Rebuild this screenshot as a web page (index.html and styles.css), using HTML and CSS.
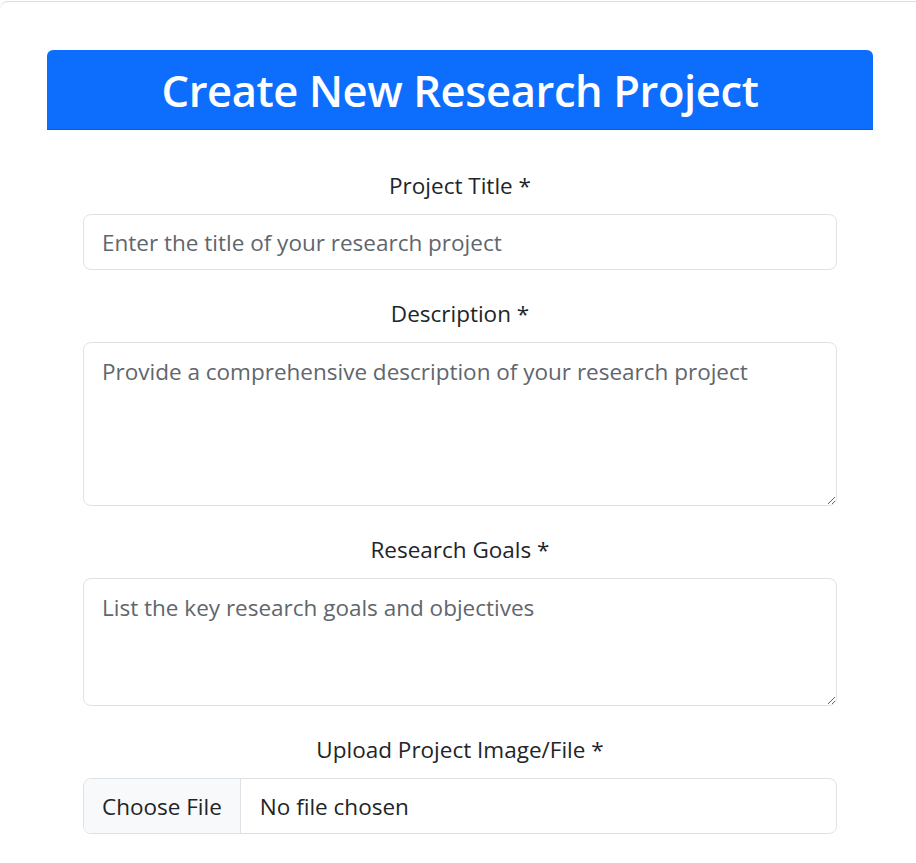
FILE: index.html
```html
<!DOCTYPE html>
<html lang="en">
<head>
<meta charset="utf-8">
<title>Create New Research Project</title>
<link rel="stylesheet" href="styles.css">
</head>
<body>
<div class="card">
  <div class="panel">
    <div class="panel-header">
      <h1 class="panel-title">Create New Research Project</h1>
    </div>
    <form class="form">
      <div class="group">
        <label class="label" for="title">Project Title *</label>
        <input class="control" id="title" type="text" placeholder="Enter the title of your research project">
      </div>
      <div class="group">
        <label class="label" for="desc">Description *</label>
        <textarea class="control area-desc" id="desc" placeholder="Provide a comprehensive description of your research project"></textarea>
      </div>
      <div class="group">
        <label class="label" for="goals">Research Goals *</label>
        <textarea class="control area-goals" id="goals" placeholder="List the key research goals and objectives"></textarea>
      </div>
      <div class="group">
        <label class="label" for="file">Upload Project Image/File *</label>
        <input class="control file" id="file" type="file">
      </div>
    </form>
  </div>
</div>
</body>
</html>
```

FILE: styles.css
```css
html, body {
  margin: 0;
  padding: 0;
  background: #ffffff;
}

body {
  font-family: "Open Sans", "Noto Sans", sans-serif;
  color: #212529;
  overflow: hidden;
}

.card {
  margin-top: 1px;
  border-top: 1px solid #dcdcdc;
  border-top-left-radius: 8px;
  padding: 48px 0 0 47px;
}

.panel {
  width: 826px;
}

.panel-header {
  background: #0d6efd;
  border-radius: 6px 6px 0 0;
  border-bottom: 1px solid #0b5ed7;
  height: 79px;
  display: flex;
  align-items: center;
  justify-content: center;
}

.panel-title {
  margin: 0 0 -3px;
  color: #ffffff;
  font-size: 43.5px;
  font-weight: 600;
  letter-spacing: -0.4px;
  line-height: 1.2;
}

.form {
  padding: 41px 36px 0;
}

.group {
  margin-bottom: 29px;
}

.label {
  display: block;
  text-align: center;
  font-size: 22.5px;
  line-height: 30px;
  margin-bottom: 13px;
  color: #212529;
}

.control {
  display: block;
  box-sizing: border-box;
  width: 100%;
  margin: 0;
  padding: 13px 18px 11px;
  font-family: inherit;
  font-size: 22.5px;
  line-height: 30px;
  color: #212529;
  background: #ffffff;
  border: 1px solid #dee2e6;
  border-radius: 8px;
}

.control::placeholder {
  color: #5f666d;
  opacity: 1;
}

.area-desc {
  height: 164px;
  padding-top: 14px;
  resize: vertical;
}

.area-goals {
  height: 128px;
  padding-top: 14px;
  resize: vertical;
}

.file {
  height: 56px;
  padding: 12px 19px;
  overflow: hidden;
}

.file::file-selector-button {
  font-family: inherit;
  font-size: 22.5px;
  line-height: 30px;
  color: #212529;
  background: #f8f9fa;
  border: 0;
  border-right: 1px solid #dee2e6;
  border-radius: 0;
  margin: -12px 19px -12px -19px;
  padding: 12px 18px;
  height: 56px;
}
```
